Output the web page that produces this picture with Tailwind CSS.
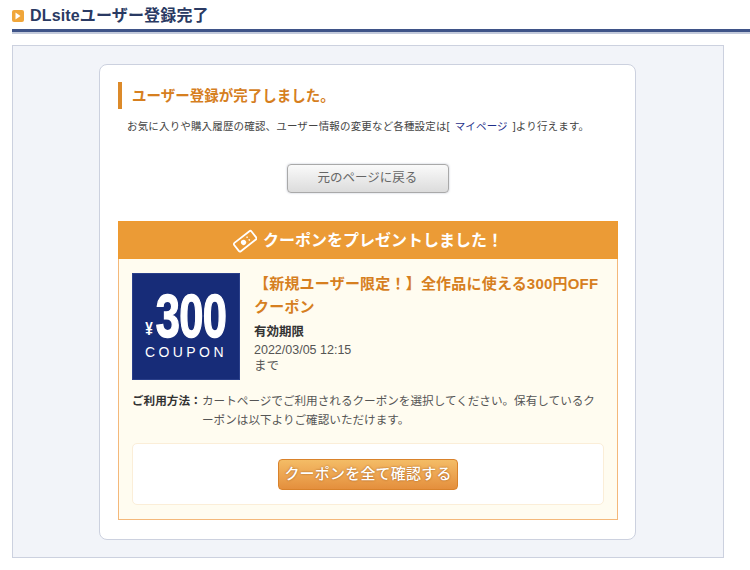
<!DOCTYPE html>
<html lang="ja">
<head>
  <meta charset="UTF-8">
  <title>DLsiteユーザー登録完了</title>
  <script src="https://cdn.jsdelivr.net/npm/@tailwindcss/browser@4"></script>
</head>
<body class="bg-white font-['Liberation_Sans','Noto_Sans_CJK_JP',sans-serif] h-[570px] overflow-hidden">
  <!-- title -->
  <div class="ml-3 h-[34px] pt-[4px] border-b-[2px] border-[#c3cadb] relative">
    <div class="flex items-center gap-[6px] h-[24px]">
      <span class="w-3 h-3 rounded-[2px] bg-[#f0a63a] flex items-center justify-center">
        <svg width="6" height="8" viewBox="0 0 6 8"><path d="M0.5 0.5 L5.5 4 L0.5 7.5 Z" fill="#fff"/></svg>
      </span>
      <h1 class="text-[16px] leading-[24px] font-bold tracking-[0.15px] text-[#2a3a63]">DLsiteユーザー登録完了</h1>
    </div>
    <div class="h-[3px] mt-[1px] bg-[#3f5488]"></div>
  </div>

  <!-- panel -->
  <div class="ml-3 mt-[11px] w-[712px] h-[513px] border border-[#ccd1df] bg-[#f2f4f9] pt-[18px] pl-[86px]">
    <div class="w-[537px] h-[476px] bg-white border border-[#ccd1df] rounded-[8px] pt-[17px] px-[18px]">
      <h2 class="h-[27px] border-l-[4px] border-[#dc8a2a] pl-[10px] text-[14.5px] leading-[29px] font-bold text-[#d67f1f] whitespace-nowrap">ユーザー登録が完了しました。</h2>
      <p class="ml-[9px] mt-[9px] text-[10.5px] leading-[16px] tracking-[0.16px] text-[#444] whitespace-nowrap">お気に入りや購入履歴の確認、ユーザー情報の変更など各種設定は[<span class="ml-[5px] mr-[5px] text-[#1f2f8a]">マイページ</span>]より行えます。</p>

      <div class="mt-[30px] flex justify-center">
        <div class="w-[162px] h-[29px] rounded-[4px] border border-[#a9a9a9] bg-gradient-to-b from-[#fafafa] to-[#dcdcdc] shadow-[0_0_2px_rgba(120,130,160,0.5)] flex items-center justify-center text-[12.5px] text-[#666]">元のページに戻る</div>
      </div>

      <!-- coupon -->
      <div class="mt-[28px] w-[500px] h-[299px] border border-[#f4b87a] bg-[#fffcf0]">
        <div class="-mx-px -mt-px h-[38px] pt-px bg-[#eb9b36] border border-[#ef9a2e] flex items-center justify-center gap-[6px] text-white text-[16px] font-bold">
          <svg width="24" height="24" viewBox="1 0 24 24" fill="none" stroke="#fff" stroke-width="1.8">
            <g transform="rotate(-38 13 12)">
              <rect x="2" y="7" width="22" height="10.5" rx="1.5"/>
              <circle cx="11" cy="12.2" r="2.6" fill="#fff" stroke="none"/>
              <path d="M17 9.5 v1.5 M17 13 v1.5" stroke-width="1.4"/>
            </g>
          </svg>
          <span>クーポンをプレゼントしました！</span>
        </div>
        <div class="px-[13px] pt-[14px]">
          <div class="flex gap-[14px]">
            <div class="w-[108px] h-[107px] shrink-0 bg-[#172c78] border border-[#2a3f8a] text-white flex flex-col items-center pt-[19px]">
              <div class="flex items-end h-[46px]">
                <span class="text-[18px] leading-[18px] font-bold mb-[1px] scale-x-75 w-[10px] flex justify-center">¥</span>
                <span class="text-[62px] leading-[46px] font-bold tracking-[-1px] w-[74px] flex justify-center scale-x-[0.7] whitespace-nowrap [-webkit-text-stroke:1.5px_white]">300</span>
              </div>
              <span class="mt-[6px] text-[14px] leading-[14px] tracking-[3.4px] whitespace-nowrap">COUPON</span>
            </div>
            <div class="w-[350px]">
              <div class="text-[15px] leading-[23px] tracking-[0.2px] font-bold text-[#d67f1f] -mt-[1px]">【新規ユーザー限定！】全作品に使える300円OFF<br>クーポン</div>
              <div class="mt-[6px] text-[12.5px] leading-[16px] font-bold text-[#333]">有効期限</div>
              <div class="mt-[2px] text-[12.5px] leading-[16px] text-[#555]">2022/03/05 12:15</div>
              <div class="text-[12.5px] leading-[16px] text-[#555]">まで</div>
            </div>
          </div>
          <div class="mt-[12px] flex text-[11.6px] leading-[18.5px] text-[#555]">
            <span class="w-[70px] shrink-0 font-bold text-[#333] whitespace-nowrap">ご利用方法：</span>
            <span class="w-[400px]">カートページでご利用されるクーポンを選択してください。保有しているクーポンは以下よりご確認いただけます。</span>
          </div>
          <div class="mt-[14px] w-[472px] h-[62px] bg-white border border-[#fbeed8] rounded-[5px] flex items-center justify-center">
            <div class="w-[180px] h-[31px] rounded-[4px] border border-[#d9822b] bg-gradient-to-b from-[#f4bc66] to-[#e48f3d] flex items-center justify-center text-white text-[15px] tracking-[0.2px] font-medium [text-shadow:0_0_2px_rgba(150,80,20,0.9)] whitespace-nowrap">クーポンを全て確認する</div>
          </div>
        </div>
      </div>
    </div>
  </div>
</body>
</html>
